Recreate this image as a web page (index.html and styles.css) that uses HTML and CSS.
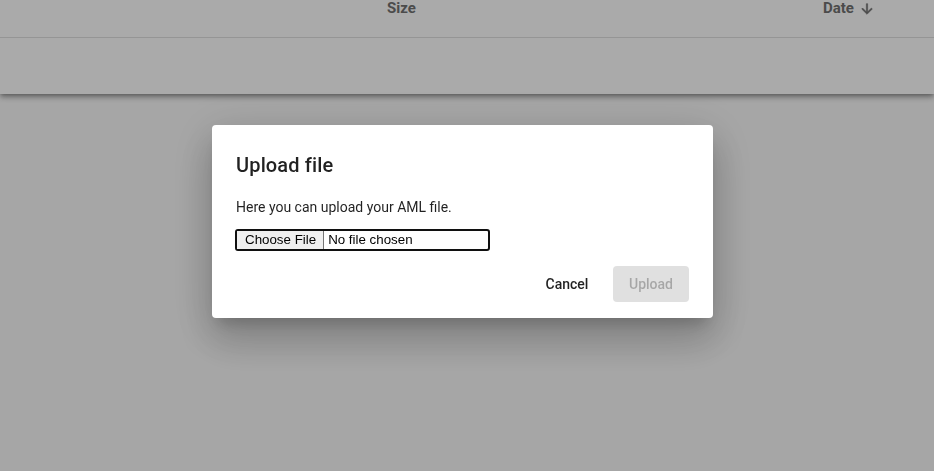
FILE: index.html
```html
<!DOCTYPE html>
<html>
<head>
<meta charset="utf-8">
<link rel="stylesheet" href="styles.css">
</head>
<body>
<div class="paper">
  <div class="head-row">
    <div class="cell name"></div>
    <div class="cell size">Size</div>
    <div class="cell date">Date <svg class="arrow" viewBox="0 0 24 24" width="16" height="16"><path d="M20 12l-1.41-1.41L13 16.17V4h-2v12.17l-5.58-5.59L4 12l8 8 8-8z" fill="currentColor" stroke="currentColor" stroke-width="0.8"/></svg></div>
  </div>
  <div class="body-row"></div>
</div>
<div class="backdrop">
  <div class="dialog">
    <h2 class="title">Upload file</h2>
    <div class="content">
      <p class="text">Here you can upload your AML file.</p>
      <div class="file"><span class="file-btn">Choose File</span><span class="file-name">No file chosen</span></div>
    </div>
    <div class="actions">
      <button class="btn cancel">Cancel</button>
      <button class="btn upload" disabled>Upload</button>
    </div>
  </div>
</div>
</body>
</html>
```
FILE: styles.css
```css
* { box-sizing: border-box; }
html, body { margin: 0; height: 100%; }
body {
  background: #fafafa;
  font-family: Roboto, "Liberation Sans", sans-serif;
  overflow: hidden;
}
.paper {
  background: #fff;
  box-shadow: 0 2px 4px -1px rgba(0,0,0,0.3), 0 4px 5px 0 rgba(0,0,0,0.18), 0 1px 10px 0 rgba(0,0,0,0.12);
}
.head-row {
  display: flex;
  height: 38px;
  border-bottom: 1px solid #e0e0e0;
  align-items: flex-start;
}
.cell {
  font-size: 15px;
  font-weight: 700;
  color: #717171;
  line-height: 17px;
}
.name { flex: 0 0 387px; }
.size { flex: 0 0 436px; }
.date { display: flex; align-items: center; gap: 5px; }
.body-row { height: 56px; }
.backdrop {
  position: fixed;
  inset: 0;
  background: rgba(0,0,0,0.333);
}
.dialog {
  position: absolute;
  left: 212px;
  top: 125px;
  width: 501px;
  height: 193px;
  background: #fff;
  border-radius: 4px;
  box-shadow: 0 11px 15px -7px rgba(0,0,0,0.2), 0 24px 38px 3px rgba(0,0,0,0.14), 0 9px 46px 8px rgba(0,0,0,0.12);
  display: flex;
  flex-direction: column;
}
.title {
  margin: 0;
  padding: 24px 24px 0;
  font-size: 20px;
  font-weight: 500;
  line-height: 32px;
  color: rgba(0,0,0,0.87);
  letter-spacing: 0.15px;
}
.content { padding: 16px 24px 0; }
.text {
  margin: 0;
  font-size: 14px;
  line-height: 20px;
  color: rgba(0,0,0,0.87);
}
.file {
  margin-top: 12px;
  margin-left: -1px;
  width: 255px;
  height: 22px;
  border: 2px solid #101010;
  border-radius: 3px;
  display: flex;
  align-items: stretch;
  font-family: "Liberation Sans", Arial, sans-serif;
  font-size: 13.33px;
  color: #000;
}
.file-btn {
  background: #efefef;
  border-right: 1px solid #767676;
  padding: 0 7px 0 8px;
  line-height: 17px;
}
.file-name { padding-left: 4px; line-height: 17px; }
.actions {
  display: flex;
  justify-content: flex-end;
  gap: 8px;
  padding: 15px 24px 0;
}
.btn {
  font-family: Roboto, "Liberation Sans", sans-serif;
  font-size: 14px;
  font-weight: 500;
  border: 0;
  border-radius: 4px;
  height: 36px;
  padding: 0 16px;
  background: transparent;
}
.cancel { color: rgba(0,0,0,0.87); min-width: 76px; }
.upload { background: #e0e0e0; color: rgba(0,0,0,0.26); width: 76px; }
```
